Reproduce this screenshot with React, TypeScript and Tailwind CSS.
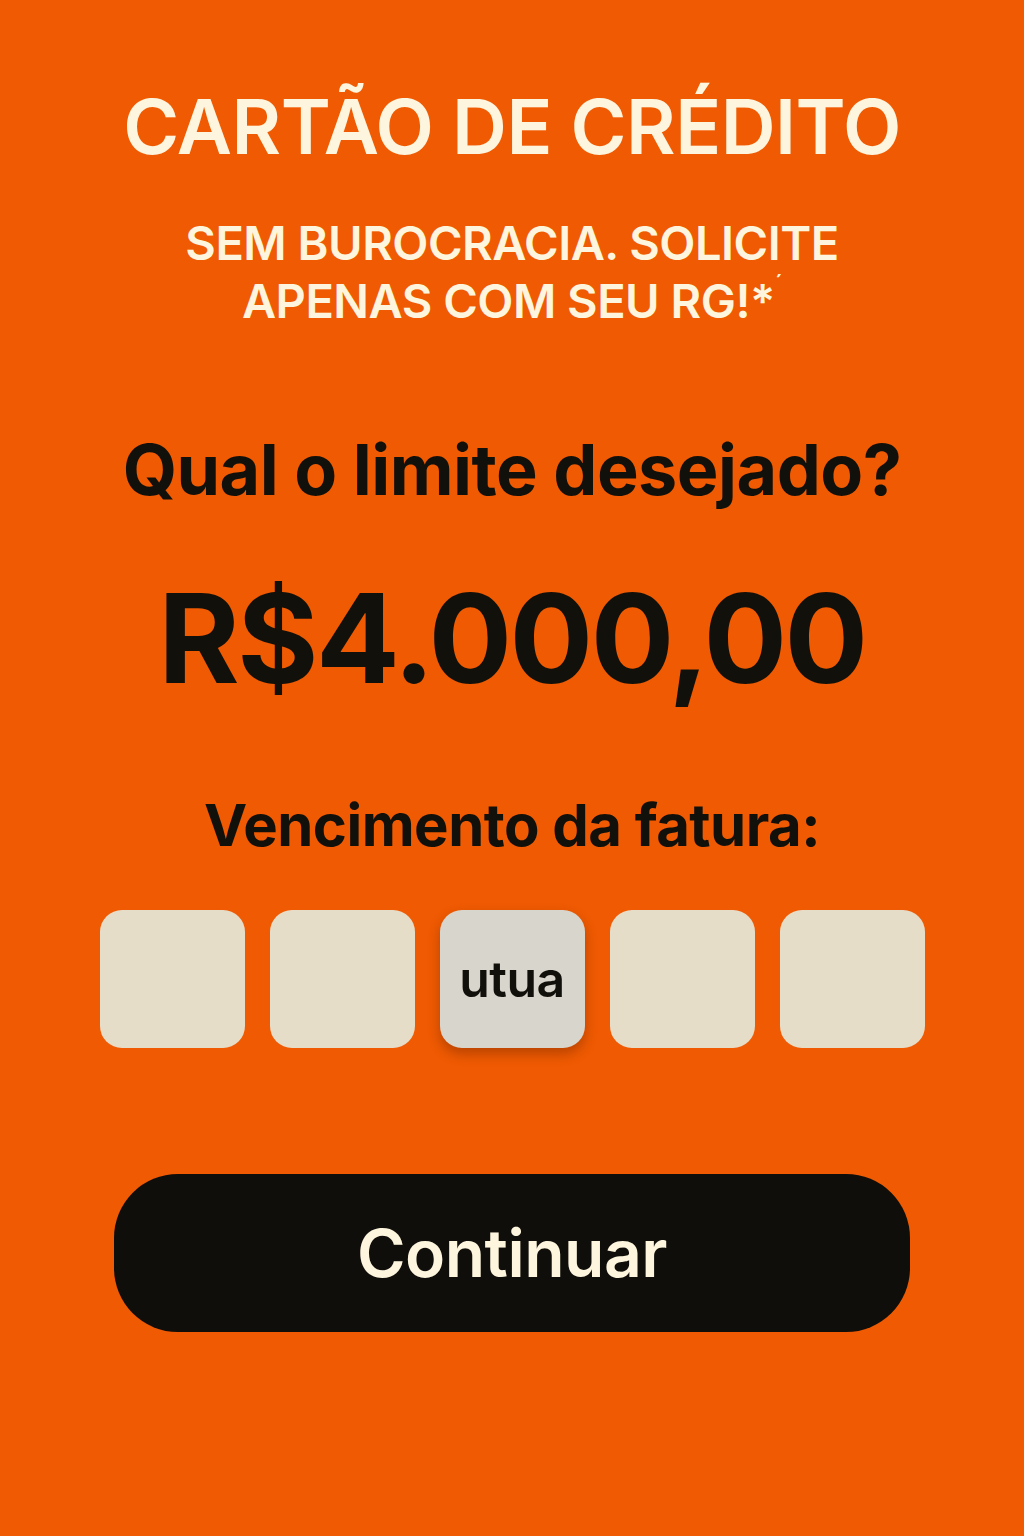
export default function App() {
  const days = ["", "", "utua", "", ""]

  return (
    <div
      className="w-[1024px] h-[1536px] bg-[#ef5a02] flex flex-col items-center"
      style={{ fontFamily: "Inter, 'Liberation Sans', sans-serif" }}
    >
      {/* Header */}
      <h1 className="mt-[80px] text-[76px] leading-[92px] font-semibold text-[#fdf5dd] tracking-[-0.5px]">
        CARTÃO DE CRÉDITO
      </h1>
      <p className="mt-[42px] text-[47px] leading-[58px] font-semibold text-[#fdf5dd] text-center tracking-[-0.5px]">
        SEM BUROCRACIA. SOLICITE
        <br />
        APENAS COM SEU RG!*
        <span className="text-[22px] leading-none align-top">´</span>
      </p>

      {/* Limite */}
      <h2 className="mt-[100px] text-[70px] leading-[80px] font-bold text-[#12100a] tracking-[-0.5px]">
        Qual o limite desejado?
      </h2>
      <div className="mt-[56px] text-[124px] leading-[144px] font-bold text-[#12100a] tracking-[-2.5px]">
        R$4.000,00
      </div>

      {/* Vencimento */}
      <h3 className="mt-[80px] text-[58px] leading-[70px] font-bold text-[#12100a] tracking-[-0.5px]">
        Vencimento da fatura:
      </h3>
      <div className="mt-[50px] flex gap-[25px]">
        {days.map((d, i) =>
          d ? (
            <div
              key={i}
              className="w-[145px] h-[138px] rounded-[22px] bg-[#d8d5cc] shadow-[0_6px_12px_rgba(90,30,0,0.35)] flex items-center justify-center text-[50px] font-semibold text-[#12100a] tracking-[-0.5px]"
            >
              {d}
            </div>
          ) : (
            <div key={i} className="w-[145px] h-[138px] rounded-[22px] bg-[#e6ddc9]" />
          )
        )}
      </div>

      {/* Button */}
      <button className="mt-[126px] w-[796px] h-[158px] rounded-[64px] bg-[#0f0e0a] text-[#fdf5dd] text-[66px] font-semibold tracking-[-0.5px]">
        Continuar
      </button>
    </div>
  )
}
